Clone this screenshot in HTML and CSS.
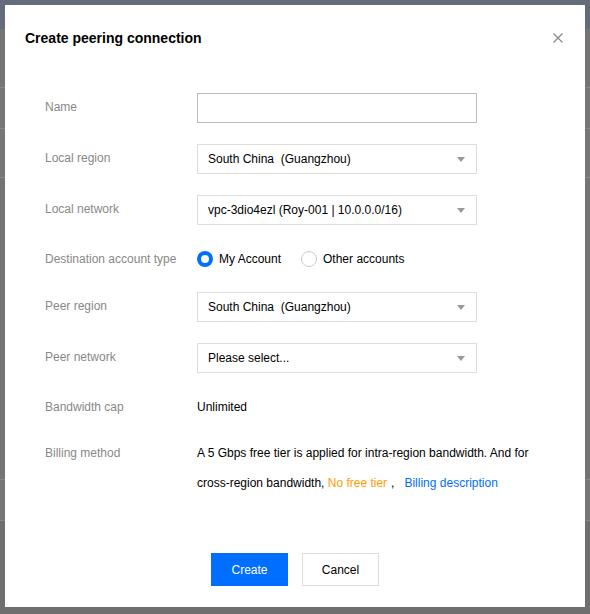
FILE: index.html
```html
<!DOCTYPE HTML>
<html lang='en'>
<head>
<meta charset='utf-8'>
<title>Create peering connection</title>
<link rel="stylesheet" href="styles.css">
</head>
<body>
<!--page behind the mask starts here-->
<div class='page'>
<div class='page_header'></div>
<div class='page_toolbar'></div>
<div class='page_row'></div>
<div class='page_row tall'></div>
<div class='page_spacer'></div>
<div class='page_row'></div>
</div>
<!--page behind the mask ends here-->
<!--dialog starts here-->
<div class='dialog'>
<div class='dialog_header'>
<span class='dialog_title'>Create peering connection</span>
<span class='dialog_close'>
<svg width='12' height='12' viewBox='0 0 12 12'><path d='M1.5 1.5L10.5 10.5M10.5 1.5L1.5 10.5' stroke='#888' stroke-width='1.3' fill='none'/></svg>
</span>
</div>
<div class='dialog_body'>
<div class='form_row'>
<label class='form_label'>Name</label>
<div class='form_control'><input type='text' class='text_input'></div>
</div>
<div class='form_row'>
<label class='form_label'>Local region</label>
<div class='form_control'><div class='select'><span>South China&nbsp;&nbsp;(Guangzhou)</span><i class='caret'></i></div></div>
</div>
<div class='form_row'>
<label class='form_label'>Local network</label>
<div class='form_control'><div class='select'><span>vpc-3dio4ezl (Roy-001 | 10.0.0.0/16)</span><i class='caret'></i></div></div>
</div>
<div class='form_row radio_row'>
<label class='form_label'>Destination account type</label>
<div class='form_control radios'>
<span class='radio checked'></span><span class='radio_text'>My Account</span>
<span class='radio'></span><span class='radio_text'>Other accounts</span>
</div>
</div>
<div class='form_row'>
<label class='form_label'>Peer region</label>
<div class='form_control'><div class='select'><span>South China&nbsp;&nbsp;(Guangzhou)</span><i class='caret'></i></div></div>
</div>
<div class='form_row'>
<label class='form_label'>Peer network</label>
<div class='form_control'><div class='select'><span>Please select...</span><i class='caret'></i></div></div>
</div>
<div class='form_row text_row'>
<label class='form_label'>Bandwidth cap</label>
<div class='form_control plain'>Unlimited</div>
</div>
<div class='form_row billing_row'>
<label class='form_label'>Billing method</label>
<div class='form_control plain'>
<div>A 5 Gbps free tier is applied for intra-region bandwidth. And for</div>
<div><span>cross-region bandwidth,</span> <span class='warn'>No free tier</span><span class='comma'>,</span><a href='#' class='link'>Billing description</a></div>
</div>
</div>
</div>
<div class='dialog_footer'>
<button type='button' class='btn primary'>Create</button>
<button type='button' class='btn'>Cancel</button>
</div>
</div>
<!--dialog ends here-->
</body>
</html>
```

FILE: styles.css
```css
html, body
{
margin:0;
padding:0;
}
body
{
width:590px;
height:614px;
overflow:hidden;
background:#6f6f6f;
font-family:"Liberation Sans", Arial, sans-serif;
font-size:12px;
color:#000;
}
.page
{
height:614px;
}
.page_header
{
height:29px;
background:#656c79;
}
.page_toolbar
{
height:58px;
background:#747474;
border-bottom:1px solid #878787;
}
.page_row
{
height:40px;
background:#767676;
border-bottom:1px solid #878787;
}
.page_row.tall
{
height:48px;
}
.page_spacer
{
height:301px;
background:#747474;
border-bottom:1px solid #878787;
}
.dialog
{
position:absolute;
left:5px;
top:5px;
width:580px;
height:602px;
background:#fff;
box-sizing:border-box;
}
.dialog_header
{
padding:23px 20px 0 20px;
height:20px;
}
.dialog_title
{
font-size:14px;
font-weight:bold;
line-height:20px;
color:#000;
}
.dialog_close
{
position:absolute;
right:21px;
top:27px;
width:12px;
height:12px;
}
.dialog_body
{
padding:45px 40px 0 40px;
}
.form_row
{
display:flex;
margin-bottom:21px;
}
.form_label
{
width:152px;
flex-shrink:0;
line-height:29px;
color:#888;
}
.form_control
{
width:280px;
}
.text_input
{
width:280px;
height:30px;
box-sizing:border-box;
border:1px solid #bbb;
margin:0;
padding:0 10px;
outline:none;
}
.select
{
height:30px;
box-sizing:border-box;
border:1px solid #ddd;
padding:0 10px;
display:flex;
align-items:center;
justify-content:space-between;
color:#000;
}
.caret
{
width:0;
height:0;
border-left:4px solid transparent;
border-right:4px solid transparent;
border-top:5px solid #999;
margin-right:1px;
}
.radio_row
{
height:25px;
}
.radio_row .form_label
{
line-height:26px;
}
.radios
{
display:flex;
align-items:center;
height:26px;
}
.radio
{
width:16px;
height:16px;
box-sizing:border-box;
border:1px solid #ccc;
border-radius:50%;
}
.radio.checked
{
border:4px solid #006eff;
}
.radio_text
{
margin-left:6px;
margin-right:20px;
}
.text_row
{
margin-bottom:18px;
}
.text_row .form_label, .text_row .plain
{
line-height:26px;
}
.billing_row .form_label
{
line-height:30px;
}
.plain
{
width:345px;
line-height:30px;
}
.warn
{
color:#ff9d00;
}
.comma
{
margin-left:4px;
margin-right:10px;
}
.link
{
color:#006eff;
text-decoration:none;
}
.dialog_footer
{
position:absolute;
left:0;
right:0;
bottom:21px;
display:flex;
justify-content:center;
gap:14px;
}
.btn
{
width:77px;
height:33px;
border:1px solid #ddd;
background:#fff;
color:#000;
font-family:"Liberation Sans", Arial, sans-serif;
font-size:12px;
padding:0;
}
.btn.primary
{
background:#006eff;
border-color:#006eff;
color:#fff;
}
```
